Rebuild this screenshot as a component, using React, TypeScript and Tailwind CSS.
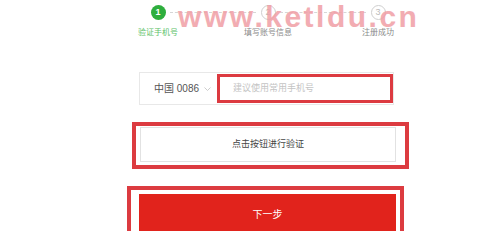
import React from 'react';

const steps = [
  { n: 1, label: '验证手机号', active: true },
  { n: 2, label: '填写账号信息', active: false },
  { n: 3, label: '注册成功', active: false },
];

const App: React.FC = () => {
  return (
    <div
      className="relative w-[499px] h-[231px] overflow-hidden bg-white"
      style={{ fontFamily: '"Liberation Sans", "Noto Sans CJK SC", sans-serif' }}
    >
      {/* step indicator */}
      <div className="flex ml-[103px] pt-[5px]">
        {steps.map((s, i) => (
          <div key={s.n} className="relative flex w-[110px] flex-col items-center">
            {i < steps.length - 1 && (
              <div className="absolute left-[67px] top-[7px] w-[86px] border-t border-dashed border-[#d6d6d6]" />
            )}
            <div
              className={
                s.active
                  ? 'relative flex h-[15px] w-[15px] items-center justify-center rounded-full bg-[#2eae3d] text-[9px] font-bold text-white'
                  : 'relative flex h-[15px] w-[15px] items-center justify-center rounded-full border border-[#cfcfcf] bg-white text-[9px] text-[#bbbbbb]'
              }
            >
              {s.n}
            </div>
            <div
              className={
                s.active
                  ? 'mt-[8px] whitespace-nowrap text-[8px] leading-[10px] text-[#5cbf68]'
                  : 'mt-[8px] whitespace-nowrap text-[8px] leading-[10px] text-[#8a8a8a]'
              }
            >
              {s.label}
            </div>
          </div>
        ))}
      </div>

      {/* watermark laid over the steps */}
      <div className="absolute left-[178px] top-[1px] text-[30px] font-bold leading-[32px] tracking-[2.5px] text-[#f09ea5] opacity-85">
        www.ketldu.cn
      </div>

      {/* phone row */}
      <div className="ml-[139px] mt-[34px] flex h-[33px] w-[255px] items-center border border-[#e8e8e8]">
        <div className="flex items-center whitespace-nowrap pl-[14px] text-[10px] text-[#555555]">
          中国 0086
          <svg className="ml-[5px]" width="7" height="4" viewBox="0 0 7 4">
            <path d="M0.5 0.5 L3.5 3.5 L6.5 0.5" fill="none" stroke="#c0c0c0" strokeWidth="0.8" />
          </svg>
        </div>
        <div className="ml-[6px] flex h-[29px] w-[183px] items-center whitespace-nowrap border-[3px] border-[#dc3a40] pl-[13px] text-[9px] text-[#c4c4c4]">
          建议使用常用手机号
        </div>
      </div>

      {/* verify button */}
      <div className="ml-[132px] mt-[17px] w-[277px] border-4 border-[#dc3b40] pl-[4px] pr-[9px] pt-[1px] pb-[3px]">
        <div className="flex h-[35px] items-center justify-center border border-[#e2e2e2] text-[9px] text-[#444444]">
          点击按钮进行验证
        </div>
      </div>

      {/* next button */}
      <div className="ml-[127px] mt-[17px] w-[277px] border-4 border-b-0 border-[#dc3b40] pl-[8px] pr-[4px] pt-[4px]">
        <div className="flex h-[40px] items-center justify-center bg-[#e1231c] text-[10px] text-white">
          下一步
        </div>
      </div>
    </div>
  );
};

export default App;
